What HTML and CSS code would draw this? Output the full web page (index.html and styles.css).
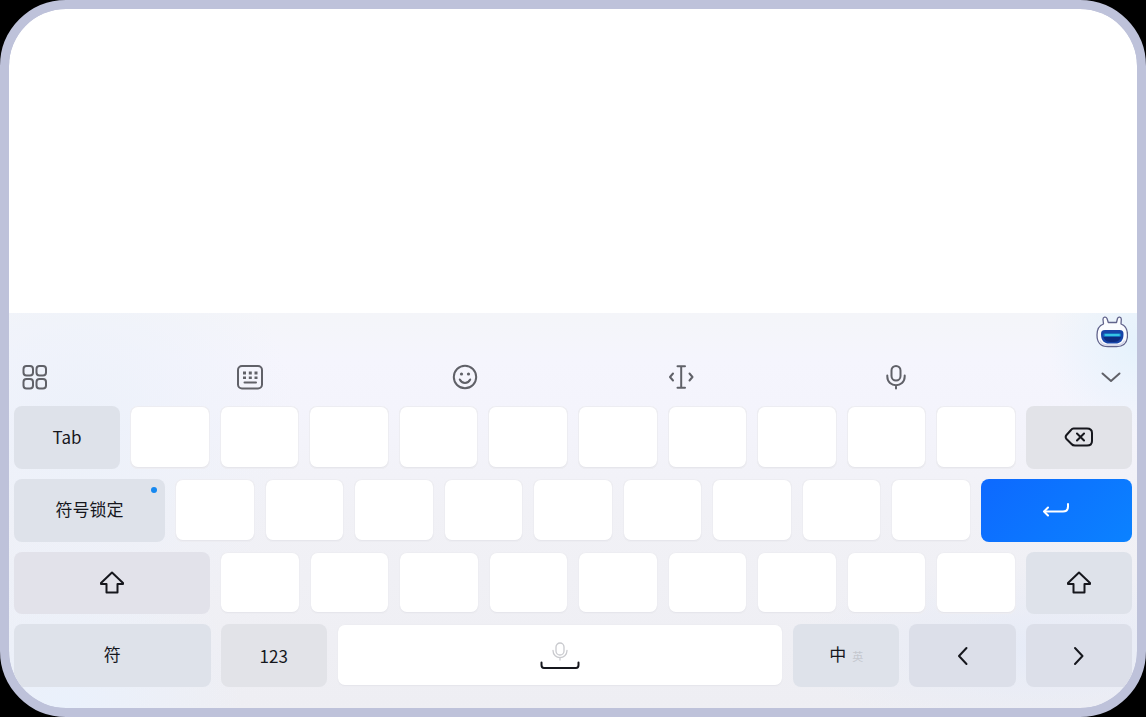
FILE: index.html
```html
<!DOCTYPE html>
<html lang="zh-CN">
<head>
<meta charset="utf-8">
<meta name="viewport" content="width=device-width, initial-scale=1">
<title>键盘</title>
<link rel="stylesheet" href="styles.css">
</head>
<body>
<div class="device">
  <main class="screen"></main>
  <section class="keyboard" aria-label="键盘">
    <div class="assistant-bar">
      <button class="tool assistant" type="button" aria-label="助手">
        <svg width="32" height="32" viewBox="0 0 32 32" fill="none">
          <path d="M7.500 8 L7 3.500 C6.800 .8 10 .3 11 2.500 L12.300 6.500 H20.500 L21.500 2.500 C22.300 .3 25.500 .8 25.300 3.500 L25 8 C29.500 9.500 31.500 13 31.500 19 C31.500 27.500 27.500 30.500 20.500 30.500 H12 C5 30.500 1 27.500 1 19 C1 13 3 9.500 7.500 8 Z" fill="#fbfcff" stroke="#62648c" stroke-width="1.300" stroke-linejoin="round"/>
          <path d="M4 24.500 C6 28.500 8 29 12 29 H20.500 C24.500 29 26.500 28.500 28.500 24.500" stroke="#d3d6ea" stroke-width="1.500"/>
          <path d="M9 14 H23.500 C26.500 14 27.500 15.500 27.500 18 C27.500 25 24 27.500 19.500 27.500 H13 C8.500 27.500 5 25 5 18 C5 15.500 6 14 9 14 Z" fill="#1745a8"/>
          <path d="M7.500 21 C9 25 11 26 16.200 26 C21.500 26 23.500 25 25 21 Z" fill="#0c2c80"/>
          <path d="M9 19 H23.500" stroke="#157cc4" stroke-width="3.500" stroke-linecap="round"/>
          <path d="M9.500 19 H23" stroke="#35c3e4" stroke-width="1.800" stroke-linecap="round"/>
        </svg>
      </button>
    </div>
    <div class="toolbar">
      <button class="tool" type="button" aria-label="功能">
        <svg class="icon" viewBox="0 0 26 26"><rect x="1.500" y="2" width="9.500" height="9.500" rx="3"/><rect x="14.500" y="2" width="9.500" height="9.500" rx="3"/><rect x="1.500" y="15" width="9.500" height="9.500" rx="3"/><rect x="14.500" y="15" width="9.500" height="9.500" rx="3"/></svg>
      </button>
      <button class="tool" type="button" aria-label="切换键盘">
        <svg class="icon" viewBox="0 0 26 26"><rect x="1" y="2" width="24" height="22.500" rx="4"/><path d="M7.500 18.500 H19"/><path class="dots" d="M6 7.500h3v3h-3z M11.800 7.500h3v3h-3z M17.500 7.500h3v3h-3z M6 12.500h3v2.500h-3z M11.800 12.500h3v2.500h-3z M17.500 12.500h3v2.500h-3z"/></svg>
      </button>
      <button class="tool" type="button" aria-label="表情">
        <svg class="icon" viewBox="0 0 26 26"><circle cx="13" cy="13" r="11.200"/><path d="M7.800 15.500 C10 20 16 20 18.200 15.500"/><circle class="dots" cx="9.500" cy="10" r="1.600"/><circle class="dots" cx="16.500" cy="10" r="1.600"/></svg>
      </button>
      <button class="tool" type="button" aria-label="移动光标">
        <svg class="icon" viewBox="0 0 26 26"><path d="M9.500 2.200 H17 M13.200 2.200 V23.800 M9.500 23.800 H17"/><path d="M5 9.500 L2 13 L5 16.500 M21.500 9.500 L24.500 13 L21.500 16.500"/></svg>
      </button>
      <button class="tool" type="button" aria-label="语音输入">
        <svg class="icon" viewBox="0 0 26 26"><rect x="8.500" y="2" width="9" height="14.500" rx="4.500"/><path d="M4.300 11.500 V12.500 C4.300 24 21.700 24 21.700 12.500 V11.500 M13 21.500 V24.500"/></svg>
      </button>
      <button class="tool" type="button" aria-label="收起键盘">
        <svg class="icon" viewBox="0 0 26 26"><path d="M4.500 9.500 L13 17 L21.500 9.500"/></svg>
      </button>
    </div>
    <div class="keys">
      <div class="row">
        <button class="key cool medium" type="button">Tab</button>
        <button class="key letter" type="button" aria-label="Q"></button>
        <button class="key letter" type="button" aria-label="W"></button>
        <button class="key letter" type="button" aria-label="E"></button>
        <button class="key letter" type="button" aria-label="R"></button>
        <button class="key letter" type="button" aria-label="T"></button>
        <button class="key letter" type="button" aria-label="Y"></button>
        <button class="key letter" type="button" aria-label="U"></button>
        <button class="key letter" type="button" aria-label="I"></button>
        <button class="key letter" type="button" aria-label="O"></button>
        <button class="key letter" type="button" aria-label="P"></button>
        <button class="key medium" type="button" aria-label="退格">
          <svg class="glyph" width="30" height="24" viewBox="0 0 30 24"><path d="M9.500 3.500 H23 C26.500 3.500 28 5 28 8 V16 C28 19 26.500 20.500 23 20.500 H11 C9.500 20.500 8.500 20.200 7.500 19 L2.500 14 C1.500 12.800 1.500 11.200 2.500 10 L7 5 C7.700 4 8.500 3.500 9.500 3.500 Z M13 8.500 L20 15.500 M20 8.500 L13 15.500"/></svg>
        </button>
      </div>
      <div class="row">
        <button class="key cool large hanzi" type="button">符号锁定<span class="dot"></span></button>
        <button class="key letter" type="button" aria-label="A"></button>
        <button class="key letter" type="button" aria-label="S"></button>
        <button class="key letter" type="button" aria-label="D"></button>
        <button class="key letter" type="button" aria-label="F"></button>
        <button class="key letter" type="button" aria-label="G"></button>
        <button class="key letter" type="button" aria-label="H"></button>
        <button class="key letter" type="button" aria-label="J"></button>
        <button class="key letter" type="button" aria-label="K"></button>
        <button class="key letter" type="button" aria-label="L"></button>
        <button class="key enter large" type="button" aria-label="换行">
          <svg class="glyph" width="28" height="24" viewBox="0 0 28 24"><path d="M26 6 V8.500 C26 12 24.500 13.500 21 13.500 H3"/><path d="M6 9.500 L2 13.500 L6 17.500"/></svg>
        </button>
      </div>
      <div class="row">
        <button class="key violet wide" type="button" aria-label="左 Shift">
          <svg class="glyph" width="26" height="26" viewBox="0 0 26 26"><path d="M13 2.500 L24 13 V14 H18.500 V22.500 H7.500 V14 H2 V13 Z"/></svg>
        </button>
        <button class="key letter" type="button" aria-label="Z"></button>
        <button class="key letter" type="button" aria-label="X"></button>
        <button class="key letter" type="button" aria-label="C"></button>
        <button class="key letter" type="button" aria-label="V"></button>
        <button class="key letter" type="button" aria-label="B"></button>
        <button class="key letter" type="button" aria-label="N"></button>
        <button class="key letter" type="button" aria-label="M"></button>
        <button class="key letter" type="button" aria-label="逗号"></button>
        <button class="key letter" type="button" aria-label="句号"></button>
        <button class="key cool medium" type="button" aria-label="右 Shift">
          <svg class="glyph" width="26" height="26" viewBox="0 0 26 26"><path d="M13 2.500 L24 13 V14 H18.500 V22.500 H7.500 V14 H2 V13 Z"/></svg>
        </button>
      </div>
      <div class="row">
        <button class="key cool wide hanzi" type="button">符</button>
        <button class="key medium" type="button">123</button>
        <button class="key letter space" type="button" aria-label="空格">
          <svg class="glyph" width="40" height="28" viewBox="0 0 40 28"><g class="faint"><rect x="16" y="1" width="8" height="12" rx="4"/><path d="M13 8.500 C13 18 27 18 27 8.500 M20 15.500 V18"/></g><path d="M1.500 20.500 V23 C1.500 25 2 26 4 26 H36 C38 26 38.500 25 38.500 23 V20.500"/></svg>
        </button>
        <button class="key cool medium lang hanzi" type="button">中<small class="lang-alt">英</small></button>
        <button class="key blue medium" type="button" aria-label="左移">
          <svg class="glyph" width="20" height="20" viewBox="0 0 20 20"><path d="M13.500 2 L6 10 L13.500 18"/></svg>
        </button>
        <button class="key blue medium" type="button" aria-label="右移">
          <svg class="glyph" width="20" height="20" viewBox="0 0 20 20"><path d="M6 2 L13.500 10 L6 18"/></svg>
        </button>
      </div>
    </div>
  </section>
</div>
</body>
</html>
```
FILE: styles.css
```css
* {
  box-sizing: border-box;
}

body {
  margin: 0;
  background: #000;
  color: #16171d;
  font-family: "Noto Sans CJK SC", "Noto Sans", sans-serif;
}

button {
  margin: 0;
  padding: 0;
  border: 0;
  background: none;
  color: inherit;
  font: inherit;
}

.device {
  display: flex;
  flex-direction: column;
  min-height: 100vh;
  overflow: hidden;
  border: 9px solid #bec2da;
  border-radius: 66px;
  background: #bec2da;
}

.screen {
  flex: 1;
  background: #fff;
  border-radius: 57px 57px 0 0;
}

.keyboard {
  overflow: hidden;
  border-radius: 0 0 57px 57px;
  padding: 0 5px 21px;
  background:
    radial-gradient(circle at 100% 8%, #e5f2fc 0, #e5f2fc00 90px),
    radial-gradient(circle at 6% 30%, #ecf1fa 0, #ecf1fa00 220px),
    radial-gradient(ellipse at 92% 85%, #e6ebf7 0, #e6ebf700 260px),
    radial-gradient(circle at 5% 100%, #eaf1fc 0, #eaf1fc00 180px),
    linear-gradient(#f4f5f9, #f5f5fd 12%, #f4f4fc 24%, #f1f1f6 50%, #eeeef3);
}

.assistant-bar,
.toolbar {
  display: flex;
  align-items: center;
}

.assistant-bar {
  justify-content: flex-end;
  height: 38px;
  padding: 0 4px;
}

.toolbar {
  justify-content: space-between;
  height: 55px;
  padding: 0 8px 3px;
}

.tool {
  display: block;
  line-height: 0;
}

.icon {
  width: 26px;
  height: 26px;
  fill: none;
  stroke: #606168;
  stroke-width: 2;
  stroke-linecap: round;
  stroke-linejoin: round;
}

.icon .dots {
  fill: #606168;
  stroke: none;
}

.keys,
.row {
  display: flex;
  gap: 10px;
}

.keys {
  flex-direction: column;
  height: 281px;
}

.row {
  flex: 1;
}

.key {
  display: flex;
  flex: 3 1 0;
  align-items: center;
  justify-content: center;
  border-radius: 8px;
  background: #e2e3e8;
  font-size: 17px;
  line-height: 24px;
}

.letter {
  background: #fff;
  box-shadow: inset 0 0 0 1px #ededf2, inset 0 -1px 0 1px #e6e6ec;
}

.cool {
  background: #dee2ea;
}

.violet {
  background: #e2e2ea;
}

.blue {
  background: #dcdfe9;
}

.enter {
  background: linear-gradient(135deg, #0d69ff, #0b82ff);
  color: #fff;
}

.medium {
  flex-grow: 4;
}

.large {
  position: relative;
  flex-grow: 5.7;
}

.wide {
  flex-grow: 7.4;
}

.space {
  flex-grow: 16.8;
}

.hanzi {
  padding-bottom: 3px;
}

.dot {
  position: absolute;
  top: 8px;
  right: 8px;
  width: 6px;
  height: 6px;
  border-radius: 50%;
  background: #1688f0;
}

.lang {
  gap: 6px;
}

.lang-alt {
  padding-top: 4px;
  color: #c4c7ce;
  font-size: 11px;
}

.glyph {
  fill: none;
  stroke: currentColor;
  stroke-width: 2;
  stroke-linecap: round;
  stroke-linejoin: round;
}

.glyph .faint {
  stroke: #c9cace;
  stroke-width: 1.3;
}
```
